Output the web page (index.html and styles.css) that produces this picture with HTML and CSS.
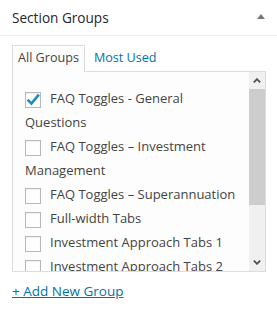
FILE: index.html
```html
<!DOCTYPE html>
<html lang="en">
<head>
  <meta charset="UTF-8">
  <meta name="viewport" content="width=device-width, initial-scale=1.0">
  <title>Section Groups</title>
  <link rel="stylesheet" href="styles.css">
</head>
<body>

<div class="postbox">
  <div class="postbox-header">
    <h2>Section Groups</h2>
    <span class="toggle-indicator"></span>
  </div>
  <div class="inside">
    <ul class="tabs">
      <li class="tab current">All Groups</li>
      <li class="tab"><a href="#">Most Used</a></li>
    </ul>
    <div class="tabs-panel">
      <ul class="checklist">
        <li><span class="checkbox checked"><svg viewBox="0 0 16 16" width="16" height="16"><path d="M2.6 7.6 L6.4 11.6 L13.8 2.6" fill="none" stroke="#1e8cbe" stroke-width="2.6"/></svg></span>FAQ Toggles - General Questions</li>
        <li><span class="checkbox"></span>FAQ Toggles – Investment Management</li>
        <li><span class="checkbox"></span>FAQ Toggles – Superannuation</li>
        <li><span class="checkbox"></span>Full-width Tabs</li>
        <li><span class="checkbox"></span>Investment Approach Tabs 1</li>
        <li><span class="checkbox"></span>Investment Approach Tabs 2</li>
      </ul>
      <div class="scrollbar">
        <div class="scroll-button">
          <svg viewBox="0 0 8 5" width="8" height="5"><path d="M0.8 4.4 L4 1.2 L7.2 4.4" fill="none" stroke="#505050" stroke-width="1.8"/></svg>
        </div>
        <div class="scroll-track">
          <div class="scroll-thumb"></div>
        </div>
        <div class="scroll-button">
          <svg viewBox="0 0 8 5" width="8" height="5"><path d="M0.8 0.6 L4 3.8 L7.2 0.6" fill="none" stroke="#505050" stroke-width="1.8"/></svg>
        </div>
      </div>
    </div>
    <p class="add-new"><a href="#">+ Add New Group</a></p>
  </div>
</div>

</body>
</html>
```

FILE: styles.css
```css
body {
  font-family: "Open Sans", Arial, sans-serif;
  font-size: 13px;
  color: #444;
  margin: 0;
  padding: 0;
  background-color: #fff;
}

a {
  color: #0073aa;
}

.postbox-header {
  display: flex;
  justify-content: space-between;
  align-items: center;
  height: 35px;
  padding: 0 12px;
  border-bottom: 1px solid #eee;
}

.postbox-header h2 {
  margin: 0;
  font-size: 13.6px;
  font-weight: normal;
  color: #23282d;
}

.toggle-indicator {
  width: 0;
  height: 0;
  border-left: 4px solid transparent;
  border-right: 4px solid transparent;
  border-bottom: 5px solid #72777c;
  margin-top: -2px;
}

.inside {
  padding: 0 11px 0 12px;
}

.tabs {
  display: flex;
  gap: 3px;
  list-style: none;
  margin: 9px 0 0;
  padding: 0;
  font-size: 12.6px;
}

.tab {
  padding: 3px 5px 5px;
  line-height: 17px;
  border: 1px solid transparent;
  border-bottom: none;
}

.tab a {
  text-decoration: none;
}

.tab.current {
  position: relative;
  z-index: 1;
  border-color: #ddd;
  background-color: #fdfdfd;
  margin-bottom: -1px;
  padding-bottom: 6px;
}

.tabs-panel {
  display: flex;
  height: 199px;
  border: 1px solid #ddd;
  background-color: #fdfdfd;
}

.checklist {
  flex: 1;
  overflow: hidden;
  list-style: none;
  margin: 0;
  padding: 14px 10px 0 12px;
}

.checklist li {
  line-height: 24px;
}

.checkbox {
  display: inline-block;
  box-sizing: border-box;
  width: 16px;
  height: 16px;
  margin-right: 9px;
  vertical-align: middle;
  border: 1px solid #b4b9be;
  background-color: #fff;
  box-shadow: inset 0 1px 2px rgba(0, 0, 0, 0.07);
  position: relative;
}

.checkbox svg {
  position: absolute;
  left: -1px;
  top: -1px;
}

.scrollbar {
  display: flex;
  flex-direction: column;
  width: 16px;
  background-color: #f0f0f0;
}

.scroll-button {
  display: flex;
  justify-content: center;
  align-items: center;
  height: 17px;
}

.scroll-track {
  flex: 1;
}

.scroll-thumb {
  height: 116px;
  background-color: #cdcdcd;
}

.add-new {
  margin: 9px 0 0;
  font-size: 13.5px;
  line-height: 20px;
}
```
